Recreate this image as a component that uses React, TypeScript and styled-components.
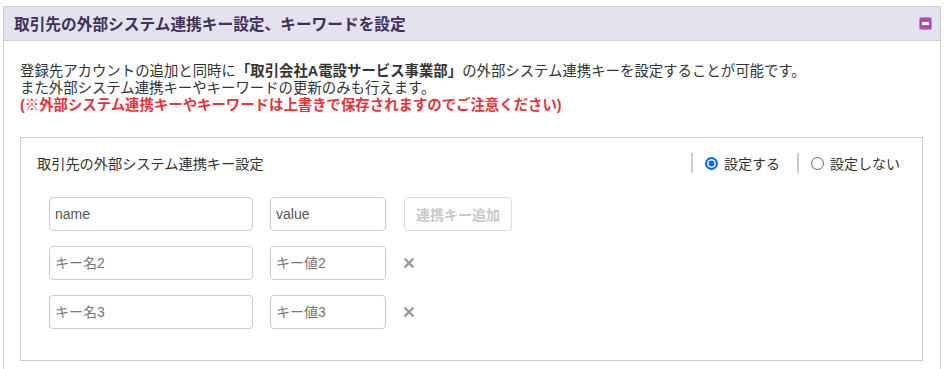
import styled, { createGlobalStyle } from "styled-components";

const GlobalStyle = createGlobalStyle`
  body {
    margin: 0;
    background: #ffffff;
    font-family: "Liberation Sans", "Noto Sans CJK JP", sans-serif;
    color: #333333;
  }
`;

const Panel = styled.section`
  margin: 6px 8px 0 3px;
  border: 1px solid #ccced8;
`;

const PanelHeader = styled.header`
  height: 33px;
  display: flex;
  align-items: center;
  justify-content: space-between;
  padding: 0 8px 0 10px;
  background: #e4e2ee;
  border-bottom: 1px solid #ccced8;
`;

const PanelTitle = styled.h2`
  margin: 0;
  font-size: 15.7px;
  font-weight: 700;
  color: #3f3159;
`;

const CollapseButton = styled.button`
  width: 13px;
  height: 13px;
  padding: 0;
  border: 1px solid #c18ccc;
  border-radius: 2px;
  background: #a54eb0;
  display: flex;
  align-items: center;
  justify-content: center;
  cursor: pointer;

  &::before {
    content: "";
    width: 7px;
    height: 3px;
    background: #ffffff;
  }
`;

const PanelBody = styled.div`
  padding: 22px 17px 16px 16px;
`;

const Description = styled.p`
  margin: 0 0 23px 0;
  font-size: 14.4px;
  line-height: 17px;
  color: #333333;
`;

const Strong = styled.strong`
  font-weight: 700;
`;

const Warning = styled.span`
  display: block;
  font-weight: 700;
  color: #e3343c;
`;

const SettingBox = styled.div`
  border: 1px solid #cccccc;
  padding: 15px 22px 31px 16px;
`;

const SettingHead = styled.div`
  display: flex;
  align-items: center;
  justify-content: space-between;
  height: 20px;
  margin-bottom: 24px;
`;

const SettingTitle = styled.span`
  font-size: 14.2px;
  color: #333333;
`;

const RadioGroup = styled.div`
  display: flex;
  align-items: center;
`;

const RadioLabel = styled.label`
  display: flex;
  align-items: center;
  gap: 6px;
  font-size: 14px;
  color: #333333;
  padding-left: 12px;
  margin-left: 17px;
  border-left: 2px solid #cccccc;
  height: 20px;
  cursor: pointer;

  &:first-child {
    margin-left: 0;
  }
`;

const RadioDot = styled.span<{ $checked?: boolean }>`
  width: 13px;
  height: 13px;
  box-sizing: border-box;
  border-radius: 50%;
  border: ${(p) => (p.$checked ? "2px solid #0a6fd6" : "1px solid #666666")};
  background: ${(p) => (p.$checked ? "#0a6fd6" : "#ffffff")};
  box-shadow: ${(p) => (p.$checked ? "inset 0 0 0 1.5px #ffffff" : "none")};
`;

const KeyRows = styled.div`
  display: flex;
  flex-direction: column;
  gap: 15px;
  padding-left: 12px;
`;

const KeyRow = styled.div`
  display: flex;
  align-items: center;
`;

const TextInput = styled.input<{ $width: number }>`
  width: ${(p) => p.$width}px;
  height: 34px;
  box-sizing: border-box;
  border: 1px solid #cccccc;
  border-radius: 4px;
  padding: 0 5px;
  font-family: "Liberation Sans", "Noto Sans CJK JP", sans-serif;
  font-size: 14px;
  color: #555555;
  margin-right: 17px;
  outline: none;

  &::placeholder {
    color: #777777;
  }
`;

const AddButton = styled.button`
  width: 108px;
  height: 34px;
  margin-left: 1px;
  border: 1px solid #dddddd;
  border-radius: 4px;
  background: #ffffff;
  color: #c8c8c8;
  font-family: "Liberation Sans", "Noto Sans CJK JP", sans-serif;
  font-size: 14px;
  font-weight: 700;
`;

const RemoveButton = styled.button`
  width: 12px;
  height: 12px;
  padding: 0;
  border: none;
  background: none;
  display: flex;
  cursor: pointer;
`;

const RemoveIcon = () => (
  <svg width="12" height="12" viewBox="0 0 12 12">
    <path d="M2.5 2.5 L9.5 9.5 M9.5 2.5 L2.5 9.5" stroke="#9a9a9a" strokeWidth="2.4" strokeLinecap="square" />
  </svg>
);

const keys = [
  { name: "name", value: "value", first: true },
  { name: "", value: "", namePh: "キー名2", valuePh: "キー値2" },
  { name: "", value: "", namePh: "キー名3", valuePh: "キー値3" },
];

export default function App() {
  return (
    <>
      <GlobalStyle />
      <Panel>
        <PanelHeader>
          <PanelTitle>取引先の外部システム連携キー設定、キーワードを設定</PanelTitle>
          <CollapseButton aria-label="折りたたむ" />
        </PanelHeader>
        <PanelBody>
          <Description>
            登録先アカウントの追加と同時に<Strong>「取引会社A電設サービス事業部」</Strong>の外部システム連携キーを設定することが可能です。
            <br />
            また外部システム連携キーやキーワードの更新のみも行えます。
            <Warning>(※外部システム連携キーやキーワードは上書きで保存されますのでご注意ください)</Warning>
          </Description>
          <SettingBox>
            <SettingHead>
              <SettingTitle>取引先の外部システム連携キー設定</SettingTitle>
              <RadioGroup>
                <RadioLabel>
                  <RadioDot $checked />
                  設定する
                </RadioLabel>
                <RadioLabel>
                  <RadioDot />
                  設定しない
                </RadioLabel>
              </RadioGroup>
            </SettingHead>
            <KeyRows>
              {keys.map((k, i) => (
                <KeyRow key={i}>
                  <TextInput $width={204} defaultValue={k.name} placeholder={k.namePh} />
                  <TextInput $width={116} defaultValue={k.value} placeholder={k.valuePh} />
                  {k.first ? (
                    <AddButton disabled>連携キー追加</AddButton>
                  ) : (
                    <RemoveButton aria-label="削除">
                      <RemoveIcon />
                    </RemoveButton>
                  )}
                </KeyRow>
              ))}
            </KeyRows>
          </SettingBox>
        </PanelBody>
      </Panel>
    </>
  );
}
